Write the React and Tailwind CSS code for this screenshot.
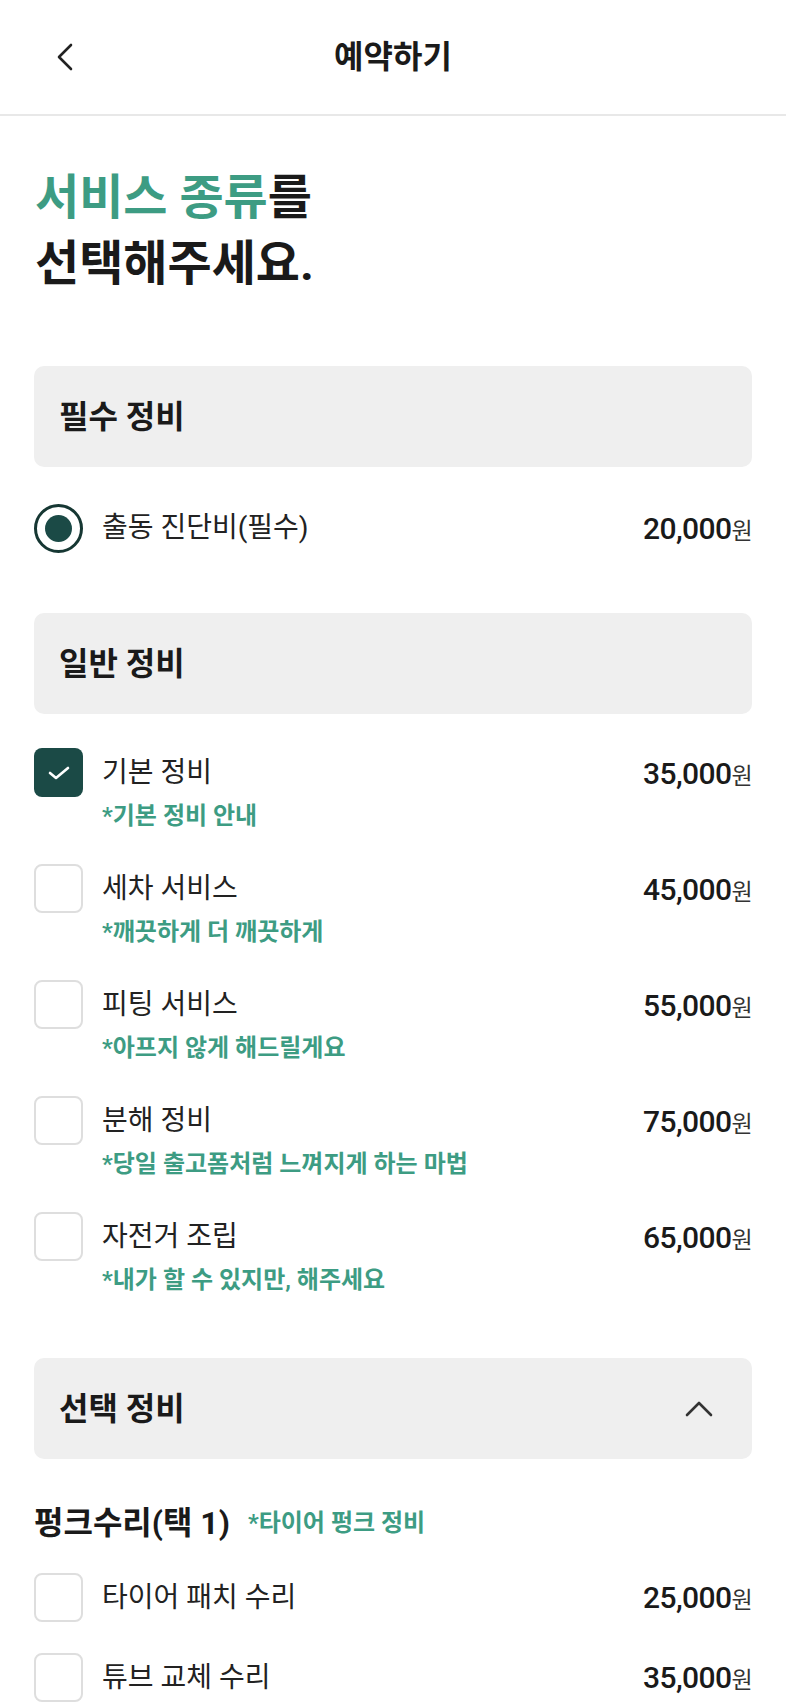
import React from "react";

const GREEN = "text-[#3d9c83]";

function Price({ value }) {
  return (
    <div className="h-[50px] flex items-center shrink-0">
      <span className="text-[30px] font-medium text-[#1a1a1a] tracking-[-0.6px]">
        {value}
        <span className="text-[23px] font-normal text-[#333]">원</span>
      </span>
    </div>
  );
}

function Check({ checked }) {
  if (checked) {
    return (
      <div className="w-[49px] h-[49px] rounded-[8px] bg-[#1b4a46] flex items-center justify-center shrink-0">
        <svg width="22" height="14" viewBox="0 0 22 14" fill="none">
          <path d="M2 7 L8 12 L20 2" stroke="#fff" strokeWidth="2.6" strokeLinecap="round" strokeLinejoin="round" />
        </svg>
      </div>
    );
  }
  return <div className="w-[49px] h-[49px] rounded-[8px] border-2 border-[#dedede] bg-white shrink-0" />;
}

function SectionBox({ title, chevron }) {
  return (
    <div className="h-[101px] rounded-[10px] bg-[#efefef] pl-[25px] pr-[39px] flex items-center justify-between">
      <span className="text-[32px] font-bold text-[#1a1a1a]">{title}</span>
      {chevron && (
        <svg width="28" height="16" viewBox="0 0 28 16" fill="none">
          <path d="M2 14 L14 2 L26 14" stroke="#333" strokeWidth="2.6" strokeLinecap="round" strokeLinejoin="round" />
        </svg>
      )}
    </div>
  );
}

function Item({ name, sub, price, checked }) {
  return (
    <div className="flex items-start justify-between h-[86px]">
      <div className="flex items-start gap-[19px]">
        <Check checked={checked} />
        <div className="flex flex-col">
          <div className="h-[50px] flex items-center text-[28px] text-[#222]">{name}</div>
          <div className={`leading-[36px] text-[24px] font-semibold ${GREEN}`}>{sub}</div>
        </div>
      </div>
      <Price value={price} />
    </div>
  );
}

function SimpleRow({ name, price }) {
  return (
    <div className="flex items-center justify-between h-[49px]">
      <div className="flex items-center gap-[19px]">
        <Check checked={false} />
        <span className="text-[28px] text-[#222]">{name}</span>
      </div>
      <Price value={price} />
    </div>
  );
}

export default function App() {
  const items = [
    { name: "기본 정비", sub: "*기본 정비 안내", price: "35,000", checked: true },
    { name: "세차 서비스", sub: "*깨끗하게 더 깨끗하게", price: "45,000" },
    { name: "피팅 서비스", sub: "*아프지 않게 해드릴게요", price: "55,000" },
    { name: "분해 정비", sub: "*당일 출고폼처럼 느껴지게 하는 마법", price: "75,000" },
    { name: "자전거 조립", sub: "*내가 할 수 있지만, 해주세요", price: "65,000" },
  ];
  return (
    <div className="w-full min-h-[1704px] bg-white font-['Roboto','Noto_Sans_CJK_KR',sans-serif] text-[#1a1a1a]">
      <header className="h-[116px] grid grid-cols-[1fr_auto_1fr] items-center border-b-2 border-[#e8e8e8]">
        <div className="pl-[56px] flex items-center">
          <svg width="18" height="28" viewBox="0 0 18 28" fill="none">
            <path d="M15 2 L3 14 L15 26" stroke="#222" strokeWidth="2.6" strokeLinecap="round" strokeLinejoin="round" />
          </svg>
        </div>
        <h1 className="text-[32px] font-bold text-[#1a1a1a]">예약하기</h1>
        <div />
      </header>

      <main className="px-[34px] pb-[40px]">
        <h2 className="mt-[49px] text-[48px] leading-[66px] font-bold text-[#1a1a1a] pl-[1px]">
          <span className={GREEN}>서비스 종류</span>를
          <br />
          선택해주세요.
        </h2>

        <div className="mt-[69px]">
          <SectionBox title="필수 정비" />
        </div>

        <div className="mt-[37px] flex items-center justify-between h-[48px]">
          <div className="flex items-center gap-[19px]">
            <div className="w-[49px] h-[49px] rounded-full border-[3px] border-[#163733] flex items-center justify-center shrink-0">
              <div className="w-[27px] h-[27px] rounded-full bg-[#1b4a46]" />
            </div>
            <span className="text-[28px] text-[#222]">출동 진단비(필수)</span>
          </div>
          <Price value="20,000" />
        </div>

        <div className="mt-[61px]">
          <SectionBox title="일반 정비" />
        </div>

        <div className="mt-[34px] flex flex-col gap-[30px]">
          {items.map((it) => (
            <Item key={it.name} {...it} />
          ))}
        </div>

        <div className="mt-[60px]">
          <SectionBox title="선택 정비" chevron />
        </div>

        <div className="mt-[44px] h-[40px] flex items-center gap-[18px]">
          <span className="text-[32px] font-bold text-[#1a1a1a]">펑크수리(택 1)</span>
          <span className={`text-[24px] font-semibold ${GREEN}`}>*타이어 펑크 정비</span>
        </div>

        <div className="mt-[30px] flex flex-col gap-[31px]">
          <SimpleRow name="타이어 패치 수리" price="25,000" />
          <SimpleRow name="튜브 교체 수리" price="35,000" />
        </div>
      </main>
    </div>
  );
}
